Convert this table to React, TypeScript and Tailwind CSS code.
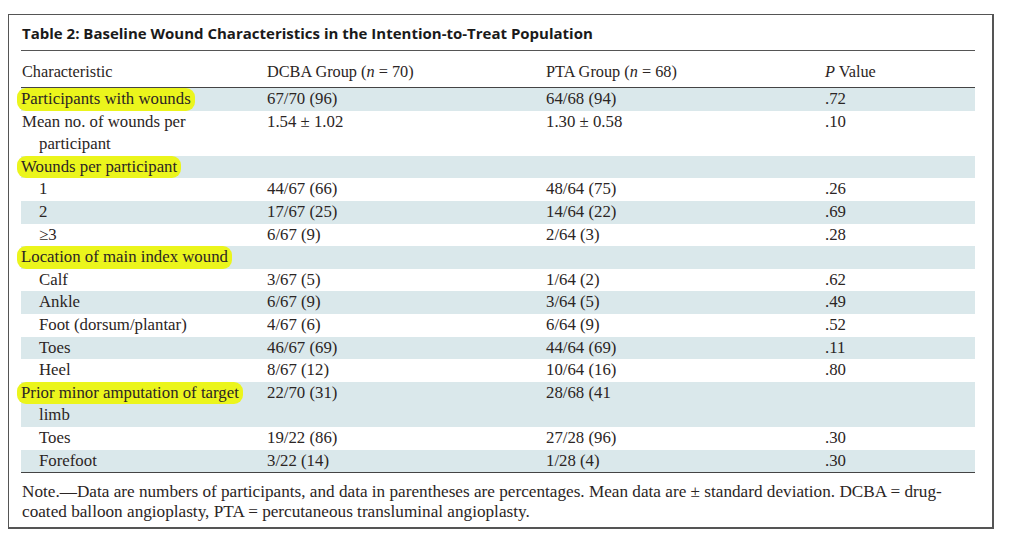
const serif = "font-['Liberation_Serif',serif]";

type Row = {
  label: string;
  dcba?: string;
  pta?: string;
  p?: string;
  head?: boolean;
  indent?: boolean;
  cont?: string;
};

const rows: Row[] = [
  { label: "Participants with wounds", dcba: "67/70 (96)", pta: "64/68 (94)", p: ".72", head: true },
  { label: "Mean no. of wounds per", cont: "participant", dcba: "1.54 ± 1.02", pta: "1.30 ± 0.58", p: ".10" },
  { label: "Wounds per participant", head: true },
  { label: "1", dcba: "44/67 (66)", pta: "48/64 (75)", p: ".26", indent: true },
  { label: "2", dcba: "17/67 (25)", pta: "14/64 (22)", p: ".69", indent: true },
  { label: "≥3", dcba: "6/67 (9)", pta: "2/64 (3)", p: ".28", indent: true },
  { label: "Location of main index wound", head: true },
  { label: "Calf", dcba: "3/67 (5)", pta: "1/64 (2)", p: ".62", indent: true },
  { label: "Ankle", dcba: "6/67 (9)", pta: "3/64 (5)", p: ".49", indent: true },
  { label: "Foot (dorsum/plantar)", dcba: "4/67 (6)", pta: "6/64 (9)", p: ".52", indent: true },
  { label: "Toes", dcba: "46/67 (69)", pta: "44/64 (69)", p: ".11", indent: true },
  { label: "Heel", dcba: "8/67 (12)", pta: "10/64 (16)", p: ".80", indent: true },
  { label: "Prior minor amputation of target", cont: "limb", dcba: "22/70 (31)", pta: "28/68 (41", head: true },
  { label: "Toes", dcba: "19/22 (86)", pta: "27/28 (96)", p: ".30", indent: true },
  { label: "Forefoot", dcba: "3/22 (14)", pta: "1/28 (4)", p: ".30", indent: true },
];

const cols = "grid grid-cols-[246px_279px_279px_1fr]";

export default function App() {
  return (
    <div className="w-[1016px] h-[549px] bg-white pt-[14px] pl-[8px]">
      <div className="w-[986px] h-[515px] border border-[#555] border-r-2 border-b-2 bg-white pl-[12px] pt-[8px]">
        {/* Title */}
        <h1 className="font-['Open_Sans',sans-serif] font-bold text-[15px] leading-[20px] text-[#1a1a1a] pl-[1px]">
          Table 2: Baseline Wound Characteristics in the Intention-to-Treat Population
        </h1>
        <div className="w-[954px] mt-[7px] border-t-[1.5px] border-[#555]" />

        <div className={`w-[954px] ${serif} text-[16.8px] text-[#2b2524]`}>
          {/* Header */}
          <div className={`${cols} text-[16.3px] leading-[22px] pt-[10px] pb-[4px] border-b-[1.5px] border-[#444]`}>
            <div className="pl-[1px]">Characteristic</div>
            <div>
              DCBA Group (<i>n</i> = 70)
            </div>
            <div>
              PTA Group (<i>n</i> = 68)
            </div>
            <div>
              <i>P</i> Value
            </div>
          </div>

          {/* Body */}
          <div className="leading-[22.6px]">
            {rows.map((r, i) => (
              <div key={i} className={`${cols} ${i % 2 === 0 ? "bg-[#dae8eb]" : "bg-white"}`}>
                <div className={r.indent ? "pl-[18px]" : "pl-[1px]"}>
                  {r.head ? (
                    <span className="-ml-[5px] px-[4px] bg-[#ebf51c] rounded-[9px] inline-block">{r.label}</span>
                  ) : (
                    <span>{r.label}</span>
                  )}
                  {r.cont && <div className="pl-[17px]">{r.cont}</div>}
                </div>
                <div>{r.dcba}</div>
                <div>{r.pta}</div>
                <div>{r.p}</div>
              </div>
            ))}
          </div>

          {/* Note */}
          <p className="border-t-[1.5px] border-[#444] pt-[9px] leading-[20px] text-[17.2px] pl-[1px]">
            Note.—Data are numbers of participants, and data in parentheses are percentages. Mean data are ± standard deviation. DCBA = drug-coated balloon angioplasty, PTA = percutaneous transluminal angioplasty.
          </p>
        </div>
      </div>
    </div>
  );
}
